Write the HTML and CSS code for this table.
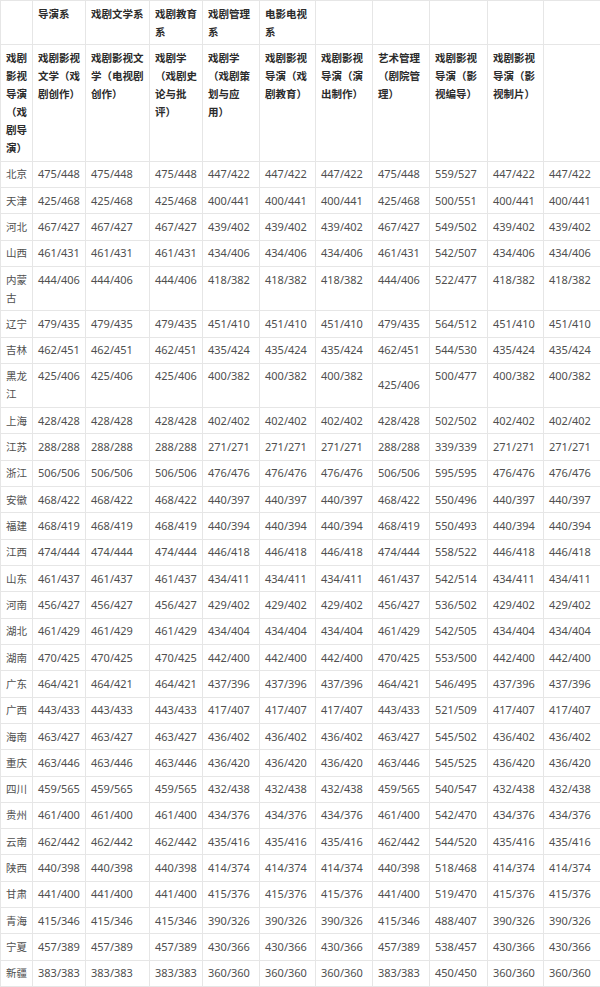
FILE: index.html
```html
<!DOCTYPE html>
<html lang="zh-CN">
<head>
<meta charset="utf-8">
<title>分数线</title>
<link rel="stylesheet" href="styles.css">
</head>
<body>
<table class="score-table">
<colgroup>
<col class="c-prov"><col class="c-a"><col class="c-b"><col class="c-c"><col class="c-d"><col class="c-e"><col class="c-f"><col class="c-g"><col class="c-h"><col class="c-i"><col class="c-j">
</colgroup>
<thead>
<tr class="head">
<th></th><th>导演系</th><th>戏剧文学系</th><th>戏剧教育系</th><th>戏剧管理系</th><th>电影电视系</th><th></th><th></th><th></th><th></th><th></th>
</tr>
<tr class="head">
<th>戏剧影视导演（戏剧导演）</th><th>戏剧影视文学（戏剧创作）</th><th>戏剧影视文学（电视剧创作）</th><th>戏剧学（戏剧史论与批评）</th><th>戏剧学（戏剧策划与应用）</th><th>戏剧影视导演（戏剧教育）</th><th>戏剧影视导演（演出制作）</th><th>艺术管理（剧院管理）</th><th>戏剧影视导演（影视编导）</th><th>戏剧影视导演（影视制片）</th><th></th>
</tr>
</thead>
<tbody>
<tr><td>北京</td><td>475/448</td><td>475/448</td><td>475/448</td><td>447/422</td><td>447/422</td><td>447/422</td><td>475/448</td><td>559/527</td><td>447/422</td><td>447/422</td></tr>
<tr><td>天津</td><td>425/468</td><td>425/468</td><td>425/468</td><td>400/441</td><td>400/441</td><td>400/441</td><td>425/468</td><td>500/551</td><td>400/441</td><td>400/441</td></tr>
<tr><td>河北</td><td>467/427</td><td>467/427</td><td>467/427</td><td>439/402</td><td>439/402</td><td>439/402</td><td>467/427</td><td>549/502</td><td>439/402</td><td>439/402</td></tr>
<tr><td>山西</td><td>461/431</td><td>461/431</td><td>461/431</td><td>434/406</td><td>434/406</td><td>434/406</td><td>461/431</td><td>542/507</td><td>434/406</td><td>434/406</td></tr>
<tr><td>内蒙古</td><td>444/406</td><td>444/406</td><td>444/406</td><td>418/382</td><td>418/382</td><td>418/382</td><td>444/406</td><td>522/477</td><td>418/382</td><td>418/382</td></tr>
<tr><td>辽宁</td><td>479/435</td><td>479/435</td><td>479/435</td><td>451/410</td><td>451/410</td><td>451/410</td><td>479/435</td><td>564/512</td><td>451/410</td><td>451/410</td></tr>
<tr><td>吉林</td><td>462/451</td><td>462/451</td><td>462/451</td><td>435/424</td><td>435/424</td><td>435/424</td><td>462/451</td><td>544/530</td><td>435/424</td><td>435/424</td></tr>
<tr><td>黑龙江</td><td>425/406</td><td>425/406</td><td>425/406</td><td>400/382</td><td>400/382</td><td>400/382</td><td class="mid">425/406</td><td>500/477</td><td>400/382</td><td>400/382</td></tr>
<tr><td>上海</td><td>428/428</td><td>428/428</td><td>428/428</td><td>402/402</td><td>402/402</td><td>402/402</td><td>428/428</td><td>502/502</td><td>402/402</td><td>402/402</td></tr>
<tr><td>江苏</td><td>288/288</td><td>288/288</td><td>288/288</td><td>271/271</td><td>271/271</td><td>271/271</td><td>288/288</td><td>339/339</td><td>271/271</td><td>271/271</td></tr>
<tr><td>浙江</td><td>506/506</td><td>506/506</td><td>506/506</td><td>476/476</td><td>476/476</td><td>476/476</td><td>506/506</td><td>595/595</td><td>476/476</td><td>476/476</td></tr>
<tr><td>安徽</td><td>468/422</td><td>468/422</td><td>468/422</td><td>440/397</td><td>440/397</td><td>440/397</td><td>468/422</td><td>550/496</td><td>440/397</td><td>440/397</td></tr>
<tr><td>福建</td><td>468/419</td><td>468/419</td><td>468/419</td><td>440/394</td><td>440/394</td><td>440/394</td><td>468/419</td><td>550/493</td><td>440/394</td><td>440/394</td></tr>
<tr><td>江西</td><td>474/444</td><td>474/444</td><td>474/444</td><td>446/418</td><td>446/418</td><td>446/418</td><td>474/444</td><td>558/522</td><td>446/418</td><td>446/418</td></tr>
<tr><td>山东</td><td>461/437</td><td>461/437</td><td>461/437</td><td>434/411</td><td>434/411</td><td>434/411</td><td>461/437</td><td>542/514</td><td>434/411</td><td>434/411</td></tr>
<tr><td>河南</td><td>456/427</td><td>456/427</td><td>456/427</td><td>429/402</td><td>429/402</td><td>429/402</td><td>456/427</td><td>536/502</td><td>429/402</td><td>429/402</td></tr>
<tr><td>湖北</td><td>461/429</td><td>461/429</td><td>461/429</td><td>434/404</td><td>434/404</td><td>434/404</td><td>461/429</td><td>542/505</td><td>434/404</td><td>434/404</td></tr>
<tr><td>湖南</td><td>470/425</td><td>470/425</td><td>470/425</td><td>442/400</td><td>442/400</td><td>442/400</td><td>470/425</td><td>553/500</td><td>442/400</td><td>442/400</td></tr>
<tr><td>广东</td><td>464/421</td><td>464/421</td><td>464/421</td><td>437/396</td><td>437/396</td><td>437/396</td><td>464/421</td><td>546/495</td><td>437/396</td><td>437/396</td></tr>
<tr><td>广西</td><td>443/433</td><td>443/433</td><td>443/433</td><td>417/407</td><td>417/407</td><td>417/407</td><td>443/433</td><td>521/509</td><td>417/407</td><td>417/407</td></tr>
<tr><td>海南</td><td>463/427</td><td>463/427</td><td>463/427</td><td>436/402</td><td>436/402</td><td>436/402</td><td>463/427</td><td>545/502</td><td>436/402</td><td>436/402</td></tr>
<tr><td>重庆</td><td>463/446</td><td>463/446</td><td>463/446</td><td>436/420</td><td>436/420</td><td>436/420</td><td>463/446</td><td>545/525</td><td>436/420</td><td>436/420</td></tr>
<tr><td>四川</td><td>459/565</td><td>459/565</td><td>459/565</td><td>432/438</td><td>432/438</td><td>432/438</td><td>459/565</td><td>540/547</td><td>432/438</td><td>432/438</td></tr>
<tr><td>贵州</td><td>461/400</td><td>461/400</td><td>461/400</td><td>434/376</td><td>434/376</td><td>434/376</td><td>461/400</td><td>542/470</td><td>434/376</td><td>434/376</td></tr>
<tr><td>云南</td><td>462/442</td><td>462/442</td><td>462/442</td><td>435/416</td><td>435/416</td><td>435/416</td><td>462/442</td><td>544/520</td><td>435/416</td><td>435/416</td></tr>
<tr><td>陕西</td><td>440/398</td><td>440/398</td><td>440/398</td><td>414/374</td><td>414/374</td><td>414/374</td><td>440/398</td><td>518/468</td><td>414/374</td><td>414/374</td></tr>
<tr><td>甘肃</td><td>441/400</td><td>441/400</td><td>441/400</td><td>415/376</td><td>415/376</td><td>415/376</td><td>441/400</td><td>519/470</td><td>415/376</td><td>415/376</td></tr>
<tr><td>青海</td><td>415/346</td><td>415/346</td><td>415/346</td><td>390/326</td><td>390/326</td><td>390/326</td><td>415/346</td><td>488/407</td><td>390/326</td><td>390/326</td></tr>
<tr><td>宁夏</td><td>457/389</td><td>457/389</td><td>457/389</td><td>430/366</td><td>430/366</td><td>430/366</td><td>457/389</td><td>538/457</td><td>430/366</td><td>430/366</td></tr>
<tr><td>新疆</td><td>383/383</td><td>383/383</td><td>383/383</td><td>360/360</td><td>360/360</td><td>360/360</td><td>383/383</td><td>450/450</td><td>360/360</td><td>360/360</td></tr>
</tbody>
</table>
</body>
</html>
```

FILE: styles.css
```css
html, body {
  margin: 0;
  padding: 0;
  background: #ffffff;
  overflow: hidden;
}

.score-table {
  border-collapse: collapse;
  table-layout: fixed;
  width: 600px;
  font-family: "Noto Sans", "Noto Sans CJK SC", sans-serif;
  font-size: 10.5px;
  line-height: 18px;
  color: #4f4f4f;
}

.c-prov { width: 32px; }
.c-a { width: 53px; }
.c-b { width: 64px; }
.c-c { width: 53px; }
.c-d { width: 57px; }
.c-e { width: 56px; }
.c-f { width: 57px; }
.c-g { width: 57px; }
.c-h { width: 58px; }
.c-i { width: 56px; }
.c-j { width: 57px; }

.score-table th,
.score-table td {
  border: 1px solid #e6e6e6;
  padding: 3.66px 5px;
  vertical-align: top;
  text-align: left;
  word-break: break-all;
}

.score-table td {
  font-size: 11px;
}

.score-table td:first-child {
  font-size: 10.5px;
}

.score-table th {
  font-weight: 700;
  color: #2b2b2b;
}

.score-table td.mid {
  vertical-align: middle;
}
```
